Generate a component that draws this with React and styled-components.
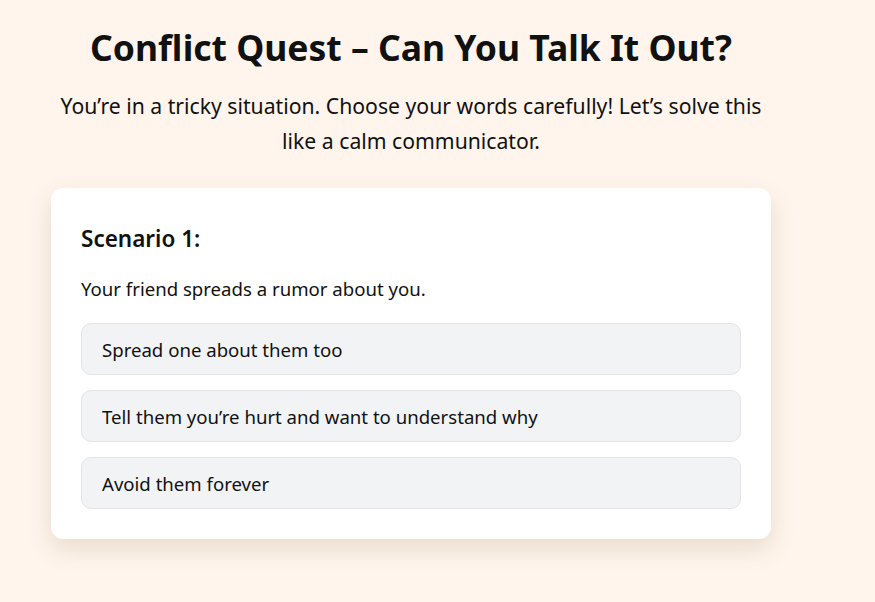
import React from 'react'
import styled, { createGlobalStyle } from 'styled-components'

const GlobalStyle = createGlobalStyle`
  html, body {
    margin: 0;
    min-height: 100%;
    background: #fff5ec;
    font-family: "Noto Sans", "Open Sans", sans-serif;
    color: #111;
  }
`

const Page = styled.main`
  width: 720px;
  margin-left: 51px;
  padding: 21px 0 60px;
  display: flex;
  flex-direction: column;
  align-items: center;
`

const Title = styled.h1`
  margin: 0;
  font-size: 35.5px;
  font-weight: 700;
  line-height: 52px;
  text-align: center;
`

const Intro = styled.p`
  margin: 15px 0 30px;
  width: 760px;
  font-size: 21.2px;
  line-height: 35px;
  text-align: center;
`

const Card = styled.section`
  box-sizing: border-box;
  width: 720px;
  padding: 30px;
  background: #fff;
  border-radius: 12px;
  box-shadow: 0 10px 24px rgba(110, 80, 50, 0.15);
`

const ScenarioTitle = styled.h2`
  margin: 6px 0 20px;
  font-size: 22.5px;
  font-weight: 600;
  line-height: 30px;
`

const Situation = styled.p`
  margin: 0 0 19px;
  font-size: 18.6px;
  line-height: 30px;
`

const Options = styled.div`
  display: flex;
  flex-direction: column;
  gap: 15px;
`

const Option = styled.button`
  box-sizing: border-box;
  height: 52px;
  padding: 0 20px;
  text-align: left;
  font-family: inherit;
  font-size: 18.6px;
  color: #111;
  background: #f2f3f5;
  border: 1px solid #e3e4e7;
  border-radius: 10px;
  cursor: pointer;
`

const choices = [
  'Spread one about them too',
  'Tell them you’re hurt and want to understand why',
  'Avoid them forever',
]

export default function App() {
  return (
    <>
      <GlobalStyle />
      <Page>
        <Title>Conflict Quest – Can You Talk It Out?</Title>
        <Intro>
          You’re in a tricky situation. Choose your words carefully! Let’s solve this
          <br />
          like a calm communicator.
        </Intro>
        <Card>
          <ScenarioTitle>Scenario 1:</ScenarioTitle>
          <Situation>Your friend spreads a rumor about you.</Situation>
          <Options>
            {choices.map(c => (
              <Option key={c}>{c}</Option>
            ))}
          </Options>
        </Card>
      </Page>
    </>
  )
}
